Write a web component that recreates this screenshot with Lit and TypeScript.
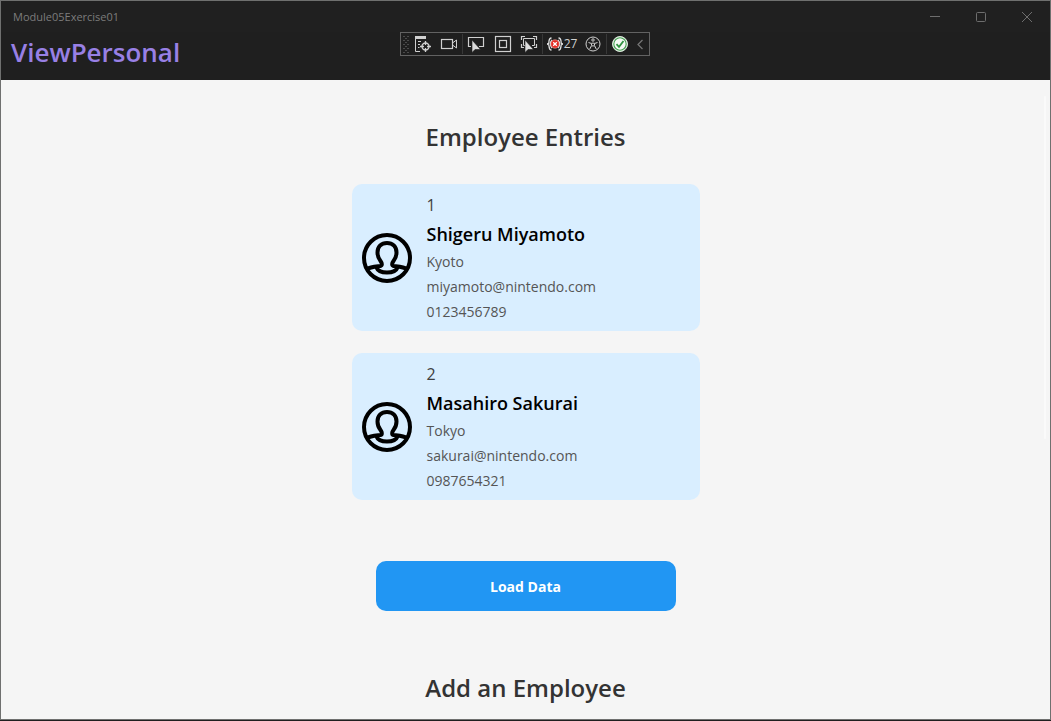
import { LitElement, html, css, svg } from "lit";
import { customElement, property, state } from "lit/decorators.js";

interface Employee {
  id: number;
  name: string;
  city: string;
  email: string;
  phone: string;
}

@customElement("employee-card")
class EmployeeCard extends LitElement {
  @property({ attribute: false }) employee!: Employee;

  static styles = css`
    :host {
      display: block;
    }
    .card {
      display: flex;
      align-items: center;
      gap: 15px;
      padding: 10px 10px 9px;
      border-radius: 10px;
      background: #d9eeff;
    }
    .avatar {
      flex: none;
      width: 50px;
      height: 50px;
    }
    .details {
      display: flex;
      flex-direction: column;
      gap: 5px;
      min-width: 0;
    }
    .id,
    .name,
    .line {
      margin: 0;
    }
    .id {
      font-size: 16px;
      line-height: 22px;
      color: #404040;
    }
    .name {
      font-size: 18px;
      line-height: 26px;
      font-weight: 600;
      color: #000;
    }
    .line {
      font-size: 14px;
      line-height: 20px;
      color: #555;
    }
  `;

  render() {
    const e = this.employee;
    return html`
      <article class="card">
        <svg class="avatar" viewBox="0 0 50 50" fill="none" stroke="#000" stroke-width="4" aria-hidden="true">
          <circle cx="25" cy="25" r="23" />
          <path d="M4 36.500C9 33.500 15 33.500 18.500 33C20.500 32.500 20 30 18.500 28C16.500 25.500 15.500 23 15.500 19.500C15.500 13.500 19.500 10 25 10S34.500 13.500 34.500 19.500C34.500 23 33.500 25.500 31.500 28C30 30 29.500 32.500 31.500 33C35 33.500 41 33.500 46 36.500" />
          <path d="M14.500 34.500C17 41.200 33 41.200 35.500 34.500" />
        </svg>
        <div class="details">
          <p class="id">${e.id}</p>
          <h2 class="name">${e.name}</h2>
          <p class="line">${e.city}</p>
          <p class="line">${e.email}</p>
          <p class="line">${e.phone}</p>
        </div>
      </article>
    `;
  }
}

const cursor = svg`<path d="M5 5V17.500L8 14.500H13.500Z" fill="#dcdcdc" stroke="#1f1f1f" stroke-width=".6" />`;

@customElement("debug-toolbar")
class DebugToolbar extends LitElement {
  @property({ type: Number }) failures = 0;

  static styles = css`
    :host {
      display: block;
    }
    .bar {
      display: flex;
      align-items: center;
      box-sizing: border-box;
      width: 250px;
      height: 24px;
      padding: 0 3px 0 2px;
      border: 1px solid #626262;
      background: #1f1f1f;
      color: #d0d0d0;
    }
    .tool {
      display: flex;
      align-items: center;
      justify-content: center;
      flex: 1 1 26px;
      height: 22px;
      margin: 0;
      padding: 0;
      border: 0;
      background: none;
      color: inherit;
      font: 12px/16px "Open Sans", "Noto Sans", sans-serif;
    }
    .tool:hover {
      background: #333;
    }
    .wide {
      flex: 1 1 36px;
    }
    .small {
      flex: 0 0 12px;
    }
    .grip {
      flex: none;
      width: 7px;
      height: 17px;
    }
    .rule {
      flex: none;
      width: 1px;
      height: 20px;
      background: #383838;
    }
    .glyph {
      flex: none;
      display: block;
      width: 18px;
      height: 18px;
    }
    .chevron {
      width: 8px;
      height: 12px;
    }
  `;

  render() {
    return html`
      <div class="bar" role="toolbar" aria-label="Debug tools">
        <svg class="grip" viewBox="0 0 7 17" fill="#4b4b4b" aria-hidden="true">
          ${[0, 4, 8, 12, 16].map(
            (y) => svg`<rect x="0" y=${y} width="2" height="1" /><rect x="4" y=${y} width="2" height="1" />`
          )}
          ${[2, 6, 10, 14].map((y) => svg`<rect x="2" y=${y} width="2" height="1" />`)}
        </svg>
        <button class="tool" aria-label="Live visual tree">
          <svg class="glyph" viewBox="0 0 18 18" fill="none" stroke="currentColor">
            <path d="M1.500 1V16.500H6" />
            <path d="M1 2.500H12" stroke-width="3" />
            <path d="M4 6.500H7M4 9.500H6M4 12.500H5.500" />
            <circle cx="11.500" cy="11.500" r="3.500" stroke-width="1.400" />
            <path d="M11.500 6V10M11.500 13V17M6 11.500H10M13 11.500H17" stroke-width="1.300" />
          </svg>
        </button>
        <button class="tool" aria-label="Camera">
          <svg class="glyph" viewBox="0 0 18 18" fill="none" stroke="currentColor">
            <rect x="1.500" y="4.500" width="11" height="9" stroke-width="1.200" />
            <path d="M12.500 8L16.500 5V13L12.500 10" />
          </svg>
        </button>
        <span class="rule"></span>
        <button class="tool" aria-label="Select element">
          <svg class="glyph" viewBox="0 0 18 18" fill="none" stroke="currentColor">
            <path d="M4 11.500H1.500V2.500H16.500V11.500H12" stroke-width="1.200" />
            ${cursor}
          </svg>
        </button>
        <button class="tool" aria-label="Display layout adorners">
          <svg class="glyph" viewBox="0 0 18 18" fill="none" stroke="currentColor" stroke-width="1.200">
            <rect x="1.500" y="1.500" width="15" height="15" />
            <rect x="5.500" y="5.500" width="7" height="7" />
          </svg>
        </button>
        <button class="tool" aria-label="Track focused element">
          <svg class="glyph" viewBox="0 0 18 18" fill="none" stroke="currentColor">
            <path d="M5 1.500H1.500V5M13 1.500H16.500V5M1.500 9V12.500H4M16.500 9V12.500H14" stroke-width="1.200" />
            <path d="M5 10.500H3.500V3.500H14.500V10.500H12" />
            ${cursor}
          </svg>
        </button>
        <span class="rule"></span>
        <button class="tool wide" aria-label="Binding failures">
          <svg class="glyph" viewBox="0 0 18 18" fill="none" stroke="#e0e0e0">
            <path d="M5.500 3C2.500 3 3 7 2.800 8S1 9 1 9S2.300 9 2.800 10S2.500 15 5.500 15M12.500 3C15.500 3 15 7 15.200 8S17 9 17 9S15.700 9 15.200 10S15.500 15 12.500 15M6 5C4 7.500 4 10.500 6 13M12 5C14 7.500 14 10.500 12 13" stroke-width="1.300" />
            <circle cx="9" cy="9" r="4.200" fill="#e5291f" stroke="#f0b0aa" stroke-width=".6" />
            <path d="M7.200 7.200L10.800 10.800M10.800 7.200L7.200 10.800" stroke="#fff" stroke-width="1.300" />
          </svg>${this.failures}
        </button>
        <button class="tool" aria-label="Scan for accessibility issues">
          <svg class="glyph" viewBox="0 0 18 18" fill="none" stroke="currentColor">
            <circle cx="9" cy="9" r="7" />
            <circle cx="9" cy="5" r="1.200" />
            <path d="M4.500 7.500L7.500 8.500V10.500L5.800 14M13.500 7.500L10.500 8.500V10.500L12.200 14M7.500 8.200H10.500M7.700 11.500L9 10.500L10.300 11.500" />
          </svg>
        </button>
        <span class="rule"></span>
        <button class="tool" aria-label="Hot reload ready">
          <svg class="glyph" viewBox="0 0 18 18" fill="none">
            <circle cx="9" cy="9" r="7.500" fill="#fff" stroke="#d8e8d8" />
            <circle cx="9" cy="9" r="6.200" fill="#f4faf4" stroke="#3c9b4a" stroke-width="1.100" />
            <path d="M5.500 9.200L8 11.800L12.500 6" stroke="#2f9340" stroke-width="1.800" />
          </svg>
        </button>
        <button class="tool small" aria-label="Collapse toolbar">
          <svg class="glyph chevron" viewBox="0 0 8 12" fill="none" stroke="#777">
            <path d="M6.500 2L2 6.500L6.500 11" stroke-width="1.200" />
          </svg>
        </button>
      </div>
    `;
  }
}

@customElement("app-root")
class AppRoot extends LitElement {
  @state() private employees: Employee[] = [
    { id: 1, name: "Shigeru Miyamoto", city: "Kyoto", email: "miyamoto@nintendo.com", phone: "0123456789" },
    { id: 2, name: "Masahiro Sakurai", city: "Tokyo", email: "sakurai@nintendo.com", phone: "0987654321" },
  ];

  static styles = css`
    :host {
      display: block;
      height: 100vh;
      padding-bottom: 1px;
      box-sizing: border-box;
      background: #1f1f1f;
      font-family: "Open Sans", "Noto Sans", sans-serif;
    }
    .window {
      position: relative;
      display: flex;
      flex-direction: column;
      box-sizing: border-box;
      height: 100%;
      border: 1px solid #6f706f;
      background: #f5f5f5;
    }
    .titlebar {
      display: flex;
      justify-content: space-between;
      align-items: center;
      height: 31px;
      padding-left: 12px;
      background: #202020;
    }
    .app-name {
      font-size: 11px;
      line-height: 16px;
      color: #7c7c7c;
    }
    .controls {
      display: flex;
    }
    .control {
      display: flex;
      align-items: center;
      justify-content: center;
      width: 46px;
      height: 31px;
      padding: 0;
      border: 0;
      background: none;
      color: #6e6e6e;
    }
    .control-icon {
      width: 12px;
      height: 12px;
    }
    .navbar {
      display: flex;
      align-items: center;
      height: 48px;
      padding: 0 10px 8px;
      box-sizing: border-box;
      background: #1f1f1f;
    }
    .page-title {
      margin: 0;
      font-size: 26px;
      line-height: 36px;
      font-weight: 600;
      color: #9880e5;
    }
    .toolbar {
      position: absolute;
      top: 31px;
      left: calc(50% - 126px);
    }
    .page {
      flex: 1;
      min-height: 0;
      overflow: hidden;
      display: flex;
      flex-direction: column;
      align-items: center;
      padding-top: 40px;
    }
    .heading {
      flex: none;
      margin: 0;
      font-size: 24px;
      line-height: 34px;
      font-weight: 600;
      color: #333;
    }
    .list {
      flex: none;
      display: flex;
      flex-direction: column;
      gap: 22px;
      width: 348px;
      max-width: 100%;
      margin: 30px 0 61px;
    }
    .load {
      flex: none;
      width: 300px;
      height: 50px;
      margin: 0 0 60px;
      padding: 2px 0 0;
      border: 0;
      border-radius: 10px;
      background: #2196f3;
      color: #fff;
      font: 700 14px/20px "Open Sans", "Noto Sans", sans-serif;
    }
    .scroll-hint {
      position: absolute;
      top: 95px;
      right: 4px;
      width: 2px;
      height: 343px;
      border-radius: 1px;
      background: #fafafa;
    }
  `;

  render() {
    return html`
      <div class="window">
        <header>
          <div class="titlebar">
            <span class="app-name">Module05Exercise01</span>
            <div class="controls">
              <button class="control" aria-label="Minimize">
                <svg class="control-icon" viewBox="0 0 12 12" fill="none" stroke="currentColor"><path d="M1 5.500H11" /></svg>
              </button>
              <button class="control" aria-label="Maximize">
                <svg class="control-icon" viewBox="0 0 12 12" fill="none" stroke="currentColor"><rect x="1.500" y="1.500" width="9" height="9" rx="1" /></svg>
              </button>
              <button class="control" aria-label="Close">
                <svg class="control-icon" viewBox="0 0 12 12" fill="none" stroke="currentColor"><path d="M1 1L11 11M11 1L1 11" /></svg>
              </button>
            </div>
          </div>
          <div class="navbar"><h1 class="page-title">ViewPersonal</h1></div>
        </header>
        <debug-toolbar class="toolbar" .failures=${27}></debug-toolbar>
        <main class="page">
          <h2 class="heading">Employee Entries</h2>
          <div class="list">
            ${this.employees.map((e) => html`<employee-card .employee=${e}></employee-card>`)}
          </div>
          <button class="load">Load Data</button>
          <h2 class="heading">Add an Employee</h2>
        </main>
        <div class="scroll-hint"></div>
      </div>
    `;
  }
}
